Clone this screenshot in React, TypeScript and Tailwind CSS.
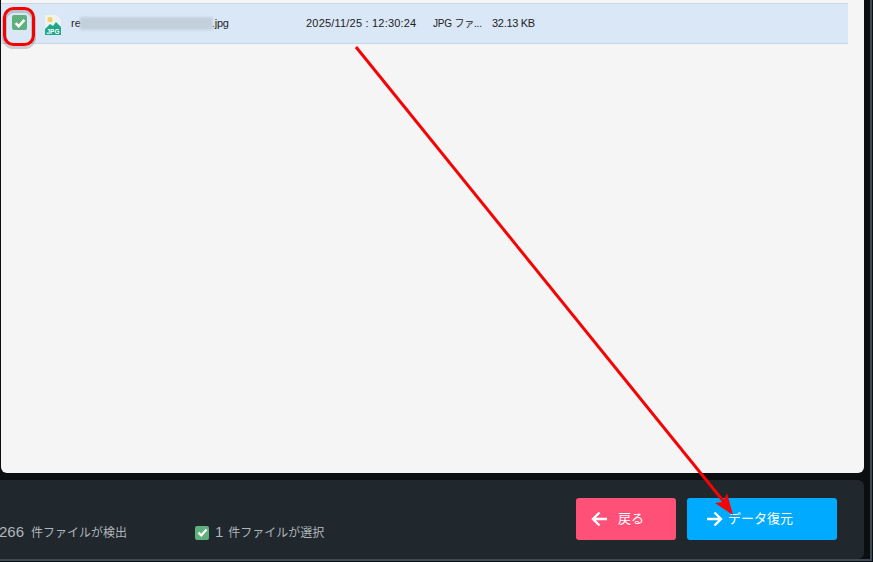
const font = { fontFamily: '"Liberation Sans", "Noto Sans CJK JP", sans-serif' };

function Check({ size }: { size: number }) {
  return (
    <span className="flex items-center justify-center rounded-[2px] bg-[#5fb07c] shrink-0" style={{ width: size, height: size }}>
      <svg width={size - 3} height={size - 3} viewBox="0 0 12 12" fill="none">
        <path d="M1.6 6.2 L4.7 9.2 L10.4 2.8" stroke="#fff" strokeWidth="2.5" />
      </svg>
    </span>
  );
}

export default function App() {
  return (
    <div className="relative w-[873px] h-[562px] overflow-hidden bg-[#0b0f12] flex flex-col" style={font}>
      <div className="ml-px w-[863px] h-[473px] shrink-0 bg-[#f5f5f5] rounded-b-[6px] pt-[3px]">
        <div className="w-[847px] h-[41px] bg-[#dae7f7] border-y border-[#c8d6e6] flex items-center text-[11px] text-[#222]">
          <div className="ml-[11px] -mt-[2px]"><Check size={15} /></div>
          <svg className="ml-[17px] mt-[3px] shrink-0" width="18" height="22" viewBox="0 0 18 22">
            <path d="M1 1h11l5 5v9H1z" fill="#eef3f0" />
            <circle cx="6" cy="5.5" r="2.6" fill="#f4cf63" />
            <path d="M1 15 L6 10 L9 12 L12 8 L17 13 V21 H1 Z" fill="#1fa88a" />
            <text x="9" y="20" textAnchor="middle" fontSize="6.5" fontWeight="700" fill="#fff" fontFamily="Liberation Sans">JPG</text>
          </svg>
          <div className="ml-[9px] w-[235px] flex items-center shrink-0">
            <span>re</span>
            <span className="w-[133px] h-[13px] bg-[#c3d0dc] blur-[1px] -ml-px" />
            <span className="-ml-[1px] tracking-[-0.2px]">.jpg</span>
          </div>
          <span className="w-[127px] shrink-0 text-[#222] tracking-[0.2px]">2025/11/25 : 12:30:24</span>
          <span className="w-[59px] shrink-0 text-[10px] tracking-[-0.2px] whitespace-nowrap">JPG ファ...</span>
          <span className="tracking-[-0.3px]">32.13 KB</span>
        </div>
      </div>
      <div className="mt-[7px] w-[864px] h-[79px] shrink-0 bg-[#20272d] rounded-r-[6px] flex items-start text-[12px] text-[#b0b6bb]">
        <div className="mt-[42px] w-[196px] shrink-0 -ml-px whitespace-nowrap leading-[20px]">
          <span className="text-[15px] mr-[7px]">266</span>件ファイルが検出
        </div>
        <div className="mt-[42px] flex items-center gap-[6px] whitespace-nowrap leading-[20px]">
          <Check size={14} />
          <span><span className="text-[15px] mr-[5px]">1</span>件ファイルが選択</span>
        </div>
        <div className="ml-auto mr-[27px] mt-[18px] flex gap-[11px] text-white text-[13px]">
          <button className="w-[100px] h-[42px] rounded-[3px] bg-[#ff5078] flex items-center pl-[15px]">
            <svg width="17" height="16" viewBox="0 0 17 16" fill="none" stroke="#fff" strokeWidth="2.4">
              <path d="M16 8H2M8.5 1.5 2 8l6.5 6.5" />
            </svg>
            <span className="ml-[10px]">戻る</span>
          </button>
          <button className="w-[150px] h-[42px] rounded-[3px] bg-[#00aaff] flex items-center pl-[19px]">
            <svg width="17" height="16" viewBox="0 0 17 16" fill="none" stroke="#fff" strokeWidth="2.4">
              <path d="M1 8h14M8.5 1.5 15 8l-6.5 6.5" />
            </svg>
            <span className="ml-[5px]">データ復元</span>
          </button>
        </div>
      </div>
      <div className="absolute right-px top-0 bottom-px w-[2px] bg-[#3d4a5a]" />
      <div className="absolute left-0 right-px bottom-px h-[2px] bg-[#3d4a5a]" />
      <svg className="absolute inset-0 pointer-events-none" width="873" height="562" viewBox="0 0 873 562" fill="none">
        <rect x="4.5" y="10.5" width="29" height="36" rx="9" stroke="#000" strokeOpacity="0.16" strokeWidth="5" />
        <rect x="4.5" y="8.5" width="29" height="36" rx="9" stroke="#f80000" strokeWidth="3" />
        <path d="M356 47 L724 502" stroke="#f40404" strokeWidth="3" />
        <path d="M733 515 L715 503 L723 502 L727 493 Z" fill="#f40404" />
      </svg>
    </div>
  );
}
